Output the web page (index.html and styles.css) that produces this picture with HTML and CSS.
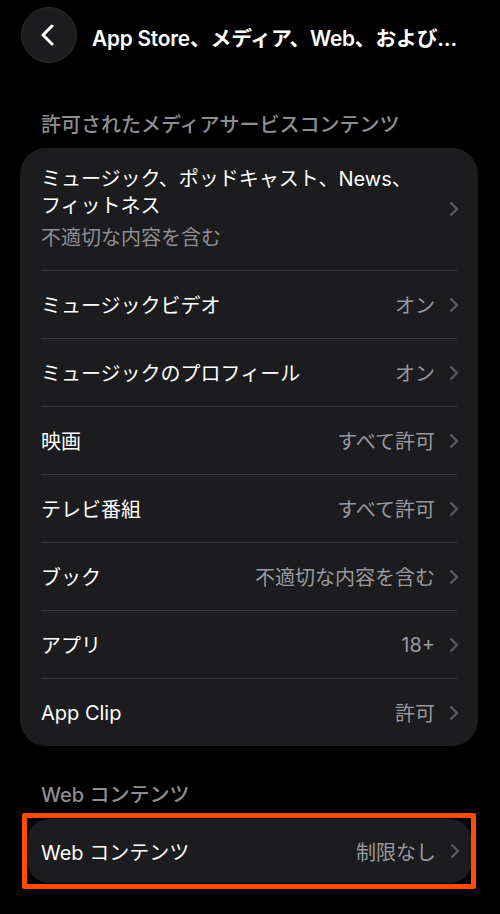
FILE: index.html
```html
<!DOCTYPE html>
<html lang="ja">
<head>
<meta charset="utf-8">
<link rel="stylesheet" href="styles.css">
</head>
<body>
<div class="page">
  <header class="nav">
    <div class="back">
      <svg width="20" height="22" viewBox="0 0 20 22"><path d="M14 2 L5 11 L14 20" fill="none" stroke="#fff" stroke-width="3" stroke-linecap="round" stroke-linejoin="round"/></svg>
    </div>
    <div class="nav-title">App Store、メディア、Web、および…</div>
  </header>

  <div class="sec-head first">許可されたメディアサービスコンテンツ</div>
  <div class="card">
    <div class="row tall">
      <div class="row-main">
        <div class="label">ミュージック、ポッドキャスト、News、<br>フィットネス</div>
        <div class="sub">不適切な内容を含む</div>
      </div>
      <span class="chev"><svg width="10" height="16" viewBox="0 0 10 16"><path d="M2 2 L8 8 L2 14" fill="none" stroke="currentColor" stroke-width="2.2" stroke-linecap="round" stroke-linejoin="round"/></svg></span>
    </div>
    <div class="row"><span class="label">ミュージックビデオ</span><span class="val">オン</span><span class="chev"><svg width="10" height="16" viewBox="0 0 10 16"><path d="M2 2 L8 8 L2 14" fill="none" stroke="currentColor" stroke-width="2.2" stroke-linecap="round" stroke-linejoin="round"/></svg></span></div>
    <div class="row"><span class="label">ミュージックのプロフィール</span><span class="val">オン</span><span class="chev"><svg width="10" height="16" viewBox="0 0 10 16"><path d="M2 2 L8 8 L2 14" fill="none" stroke="currentColor" stroke-width="2.2" stroke-linecap="round" stroke-linejoin="round"/></svg></span></div>
    <div class="row"><span class="label">映画</span><span class="val">すべて許可</span><span class="chev"><svg width="10" height="16" viewBox="0 0 10 16"><path d="M2 2 L8 8 L2 14" fill="none" stroke="currentColor" stroke-width="2.2" stroke-linecap="round" stroke-linejoin="round"/></svg></span></div>
    <div class="row"><span class="label">テレビ番組</span><span class="val">すべて許可</span><span class="chev"><svg width="10" height="16" viewBox="0 0 10 16"><path d="M2 2 L8 8 L2 14" fill="none" stroke="currentColor" stroke-width="2.2" stroke-linecap="round" stroke-linejoin="round"/></svg></span></div>
    <div class="row"><span class="label">ブック</span><span class="val">不適切な内容を含む</span><span class="chev"><svg width="10" height="16" viewBox="0 0 10 16"><path d="M2 2 L8 8 L2 14" fill="none" stroke="currentColor" stroke-width="2.2" stroke-linecap="round" stroke-linejoin="round"/></svg></span></div>
    <div class="row"><span class="label">アプリ</span><span class="val">18+</span><span class="chev"><svg width="10" height="16" viewBox="0 0 10 16"><path d="M2 2 L8 8 L2 14" fill="none" stroke="currentColor" stroke-width="2.2" stroke-linecap="round" stroke-linejoin="round"/></svg></span></div>
    <div class="row"><span class="label">App Clip</span><span class="val">許可</span><span class="chev"><svg width="10" height="16" viewBox="0 0 10 16"><path d="M2 2 L8 8 L2 14" fill="none" stroke="currentColor" stroke-width="2.2" stroke-linecap="round" stroke-linejoin="round"/></svg></span></div>
  </div>

  <div class="sec-head second">Web コンテンツ</div>
  <div class="hl-wrap">
    <div class="card small">
      <div class="row single"><span class="label">Web コンテンツ</span><span class="val">制限なし</span><span class="chev"><svg width="10" height="16" viewBox="0 0 10 16"><path d="M2 2 L8 8 L2 14" fill="none" stroke="currentColor" stroke-width="2.2" stroke-linecap="round" stroke-linejoin="round"/></svg></span></div>
    </div>
    <div class="highlight"></div>
  </div>
</div>
</body>
</html>
```

FILE: styles.css
```css
* { box-sizing: border-box; }
html, body {
  margin: 0;
  background: #000;
}
body {
  font-family: "Inter", "Noto Sans CJK JP", sans-serif;
  color: #fff;
  width: 500px;
  height: 914px;
  overflow: hidden;
}
.page {
  padding: 7px 22px 0 20px;
}
.nav {
  display: flex;
  align-items: center;
  height: 56px;
}
.back {
  width: 56px;
  height: 56px;
  border-radius: 50%;
  background: #1c1c1e;
  border: 1px solid #2c2c2e;
  display: flex;
  align-items: center;
  justify-content: center;
  margin-left: 1px;
  padding-right: 3px;
}
.nav-title {
  margin-left: 15px;
  font-size: 20.8px;
  font-weight: 600;
  letter-spacing: -0.2px;
  white-space: nowrap;
  margin-top: 3px;
}
.sec-head {
  color: #8d8d92;
  font-size: 20px;
  font-weight: 500;
  line-height: 28px;
  padding-left: 21px;
}
.sec-head.first { margin-top: 48px; margin-bottom: 9px; }
.sec-head.second { margin-top: 35px; margin-bottom: 10px; }
.card {
  background: #1c1c1e;
  border-radius: 26px;
  padding: 0 21px;
}
.row {
  display: flex;
  align-items: center;
  height: 68px;
  border-top: 1px solid #38383a;
  font-size: 20px;
}
.row.tall {
  height: 122px;
  border-top: none;
  align-items: center;
}
.row-main {
  flex: 1;
}
.row-main .label {
  line-height: 27px;
}
.sub {
  color: #8d8d92;
  line-height: 28px;
  margin-top: 4px;
}
.label {
  flex: 1;
  white-space: nowrap;
}
.val {
  color: #98989e;
  margin-right: 14px;
}
.chev {
  color: #5c5c60;
  display: flex;
  align-items: center;
  margin-right: -2px;
}
.hl-wrap {
  position: relative;
  padding: 0 6px 0 7px;
}
.card.small {
  border-radius: 22px;
  padding: 0 14px;
}
.row.single {
  height: 64px;
  border-top: none;
}
.highlight {
  position: absolute;
  left: 2px;
  right: 2px;
  top: -6px;
  bottom: -6px;
  border: 5px solid #ff4a08;
  border-radius: 2px;
  pointer-events: none;
}
```
